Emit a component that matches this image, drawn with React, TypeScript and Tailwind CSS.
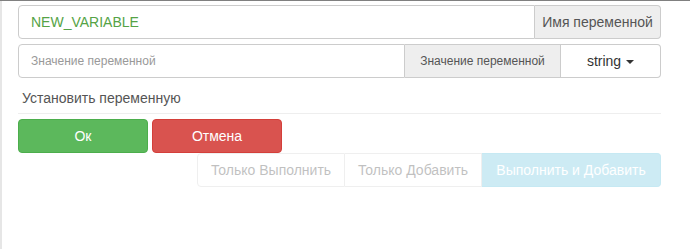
import React from "react";

export default function App() {
  return (
    <div
      className="w-[690px] h-[249px] bg-white border-t border-[#808080] flex overflow-hidden"
      style={{ fontFamily: '"Liberation Sans", Arial, sans-serif' }}
    >
      <div className="w-[2px] bg-[#e6e6e6] shrink-0" />
      <div className="pl-4 pt-1 w-[659px] flex flex-col">
        {/* Row 1 */}
        <div className="flex h-[34px]">
          <div className="flex-1 flex items-center px-3 border border-[#ccc] rounded-l-[4px] text-[14px] text-[#55a346]">
            NEW_VARIABLE
          </div>
          <div className="w-[126px] flex items-center justify-center border border-l-0 border-[#ccc] rounded-r-[4px] bg-[#eeeeee] text-[14px] text-[#555]">
            Имя переменной
          </div>
        </div>
        {/* Row 2 */}
        <div className="flex h-[34px] mt-[5px]">
          <div className="flex-1 flex items-center px-3 border border-[#ccc] rounded-l-[4px] text-[12px] text-[#999]">
            Значение переменной
          </div>
          <div className="w-[156px] flex items-center justify-center border border-l-0 border-[#ccc] bg-[#eeeeee] text-[12px] text-[#555]">
            Значение переменной
          </div>
          <div className="w-[100px] flex items-center justify-center gap-[5px] border border-l-0 border-[#ccc] rounded-r-[4px] bg-white text-[14px] text-[#333]">
            <span>string</span>
            <span className="inline-block w-0 h-0 border-t-[4px] border-t-[#333] border-x-[4px] border-x-transparent mt-[1px]" />
          </div>
        </div>
        {/* Label */}
        <div className="mt-[10px] h-[20px] leading-[20px] pl-1 text-[14px] text-[#555]">
          Установить переменную
        </div>
        <div className="mt-[5px] h-px bg-[#eeeeee]" />
        {/* Buttons */}
        <div className="mt-[5px] flex gap-[4px]">
          <div className="w-[130px] h-[34px] flex items-center justify-center rounded-[4px] bg-[#5cb85c] border border-[#4cae4c] text-white text-[14px]">
            Ок
          </div>
          <div className="w-[130px] h-[34px] flex items-center justify-center rounded-[4px] bg-[#d9534f] border border-[#d43f3a] text-white text-[14px]">
            Отмена
          </div>
        </div>
        <div className="flex justify-end">
          <div className="flex opacity-30 h-[34px] text-[14px]">
            <div className="w-[148px] flex items-center justify-center border border-[#ccc] rounded-l-[4px] text-[#333] bg-white">
              Только Выполнить
            </div>
            <div className="w-[137px] flex items-center justify-center border border-l-0 border-[#ccc] text-[#333] bg-white">
              Только Добавить
            </div>
            <div className="w-[179px] flex items-center justify-center border border-l-0 border-[#46b8da] rounded-r-[4px] text-white bg-[#5bc0de]">
              Выполнить и Добавить
            </div>
          </div>
        </div>
      </div>
    </div>
  );
}
